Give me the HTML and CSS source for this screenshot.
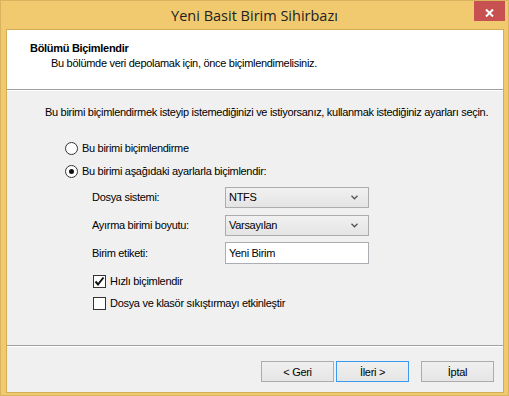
FILE: index.html
```html
<!DOCTYPE html>
<html lang="tr">
<head>
  <meta charset="UTF-8">
  <title>Yeni Basit Birim Sihirbazı</title>
  <link rel="stylesheet" href="styles.css">
</head>
<body>

<div class="window">
  <div class="titlebar">
    <span></span>
    <span class="title">Yeni Basit Birim Sihirbazı</span>
    <button class="close" title="Kapat">
      <svg width="9" height="8" viewBox="0 0 9 8"><path d="M1 0.5 L8 7.5 M8 0.5 L1 7.5" stroke="#fff" stroke-width="2"/></svg>
    </button>
  </div>

  <div class="client">
    <div class="header">
      <div class="header-title">Bölümü Biçimlendir</div>
      <div class="header-sub">Bu bölümde veri depolamak için, önce biçimlendimelisiniz.</div>
    </div>

    <div class="content">
      <p class="intro">Bu birimi biçimlendirmek isteyip istemediğinizi ve istiyorsanız, kullanmak istediğiniz ayarları seçin.</p>

      <div class="radio-row">
        <span class="radio"></span>
        <span>Bu birimi biçimlendirme</span>
      </div>
      <div class="radio-row second">
        <span class="radio checked"></span>
        <span>Bu birimi aşağıdaki ayarlarla biçimlendir:</span>
      </div>

      <div class="fields">
        <div class="field">
          <span class="field-label">Dosya sistemi:</span>
          <div class="select">
            <span>NTFS</span>
            <svg width="7" height="5" viewBox="0 0 7 5"><path d="M0.5 0.8 L3.5 3.8 L6.5 0.8" fill="none" stroke="#555" stroke-width="1.3"/></svg>
          </div>
        </div>
        <div class="field">
          <span class="field-label">Ayırma birimi boyutu:</span>
          <div class="select">
            <span>Varsayılan</span>
            <svg width="7" height="5" viewBox="0 0 7 5"><path d="M0.5 0.8 L3.5 3.8 L6.5 0.8" fill="none" stroke="#555" stroke-width="1.3"/></svg>
          </div>
        </div>
        <div class="field text-field">
          <span class="field-label">Birim etiketi:</span>
          <div class="textbox">Yeni Birim</div>
        </div>
      </div>

      <div class="check-row">
        <span class="checkbox">
          <svg width="11" height="11" viewBox="0 0 11 11"><path d="M1.5 5.5 L4 8.5 L9.5 1.5" fill="none" stroke="#111" stroke-width="2"/></svg>
        </span>
        <span>Hızlı biçimlendir</span>
      </div>
      <div class="check-row second">
        <span class="checkbox"></span>
        <span>Dosya ve klasör sıkıştırmayı etkinleştir</span>
      </div>
    </div>

    <div class="footer">
      <button class="btn">&lt; Geri</button>
      <button class="btn default">İleri &gt;</button>
      <button class="btn cancel">İptal</button>
    </div>
  </div>
</div>

</body>
</html>
```

FILE: styles.css
```css
* {
  margin: 0;
  padding: 0;
  box-sizing: border-box;
}
body {
  width: 509px;
  height: 396px;
  overflow: hidden;
  font-family: "Liberation Sans", Arial, sans-serif;
  font-size: 11px;
  line-height: 13px;
  letter-spacing: -0.3px;
  white-space: nowrap;
  color: #000;
  background: #f0c86e;
}
.window {
  width: 509px;
  height: 396px;
  background: #f1ca6f;
  border: 1px solid #d9b35d;
  padding-bottom: 2px;
  display: flex;
  flex-direction: column;
}
.titlebar {
  height: 28px;
  display: grid;
  grid-template-columns: 1fr auto 1fr;
  align-items: start;
}
.title {
  font-family: "Open Sans", "Noto Sans", sans-serif;
  font-size: 14.5px;
  line-height: 20px;
  letter-spacing: 0;
  padding-top: 5px;
  color: #222;
}
.close {
  justify-self: end;
  width: 31px;
  height: 20px;
  margin-right: 3px;
  border: none;
  background: #c75050;
  display: flex;
  align-items: center;
  justify-content: center;
  padding-top: 3px;
}
.client {
  flex: 1;
  margin: 0 4px 0 5px;
  border: 1px solid #d3ac55;
  background: #f0f0f0;
  display: flex;
  flex-direction: column;
}
.header {
  height: 60px;
  background: #fff;
  border-bottom: 1px solid #a0a0a0;
  padding: 12px 0 0 23px;
}
.header-title {
  font-weight: bold;
}
.header-sub {
  margin: 2px 0 0 21px;
}
.content {
  flex: 1;
  border-top: 1px solid #fff;
  padding: 15px 0 0 38px;
}
.intro {
  margin-bottom: 23px;
}
.radio-row,
.check-row {
  display: flex;
  align-items: center;
  gap: 4px;
  height: 13px;
  margin-left: 20px;
}
.radio-row.second {
  margin-top: 10px;
}
.radio {
  width: 13px;
  height: 13px;
  border: 1px solid #333;
  border-radius: 50%;
  background: #fff;
  display: flex;
  align-items: center;
  justify-content: center;
}
.radio.checked::after {
  content: "";
  width: 5px;
  height: 5px;
  border-radius: 50%;
  background: #111;
}
.fields {
  margin: 9px 0 0 47px;
}
.field {
  display: flex;
  align-items: center;
  margin-bottom: 7px;
}
.field.text-field {
  margin-top: -1px;
}
.field-label {
  width: 133px;
}
.select,
.textbox {
  width: 144px;
  height: 21px;
  border: 1px solid #acacac;
  padding: 0 0 0 3px;
  display: flex;
  align-items: center;
}
.select {
  justify-content: space-between;
  padding-right: 10px;
  background: linear-gradient(#f1f1f1, #e4e4e4);
}
.textbox {
  height: 22px;
  background: #fff;
  border-color: #abadb3;
}
.check-row {
  margin: 11px 0 0 48px;
}
.check-row.second {
  margin-top: 9px;
}
.checkbox {
  width: 13px;
  height: 13px;
  border: 1px solid #333;
  background: #fff;
  display: flex;
  align-items: center;
  justify-content: center;
}
.footer {
  height: 47px;
  border-top: 1px solid #a0a0a0;
  box-shadow: inset 0 1px #fff;
  display: flex;
  justify-content: flex-end;
  align-items: flex-start;
  padding: 15px 9px 0 0;
  gap: 2px;
}
.btn {
  width: 73px;
  height: 21px;
  font-family: "Liberation Sans", Arial, sans-serif;
  font-size: 11px;
  letter-spacing: -0.3px;
  color: #000;
  border: 1px solid #acacac;
  background: linear-gradient(#f0f0f0, #e5e5e5);
}
.btn.default {
  border-color: #3c99f0;
}
.btn.cancel {
  margin-left: 10px;
}
```
